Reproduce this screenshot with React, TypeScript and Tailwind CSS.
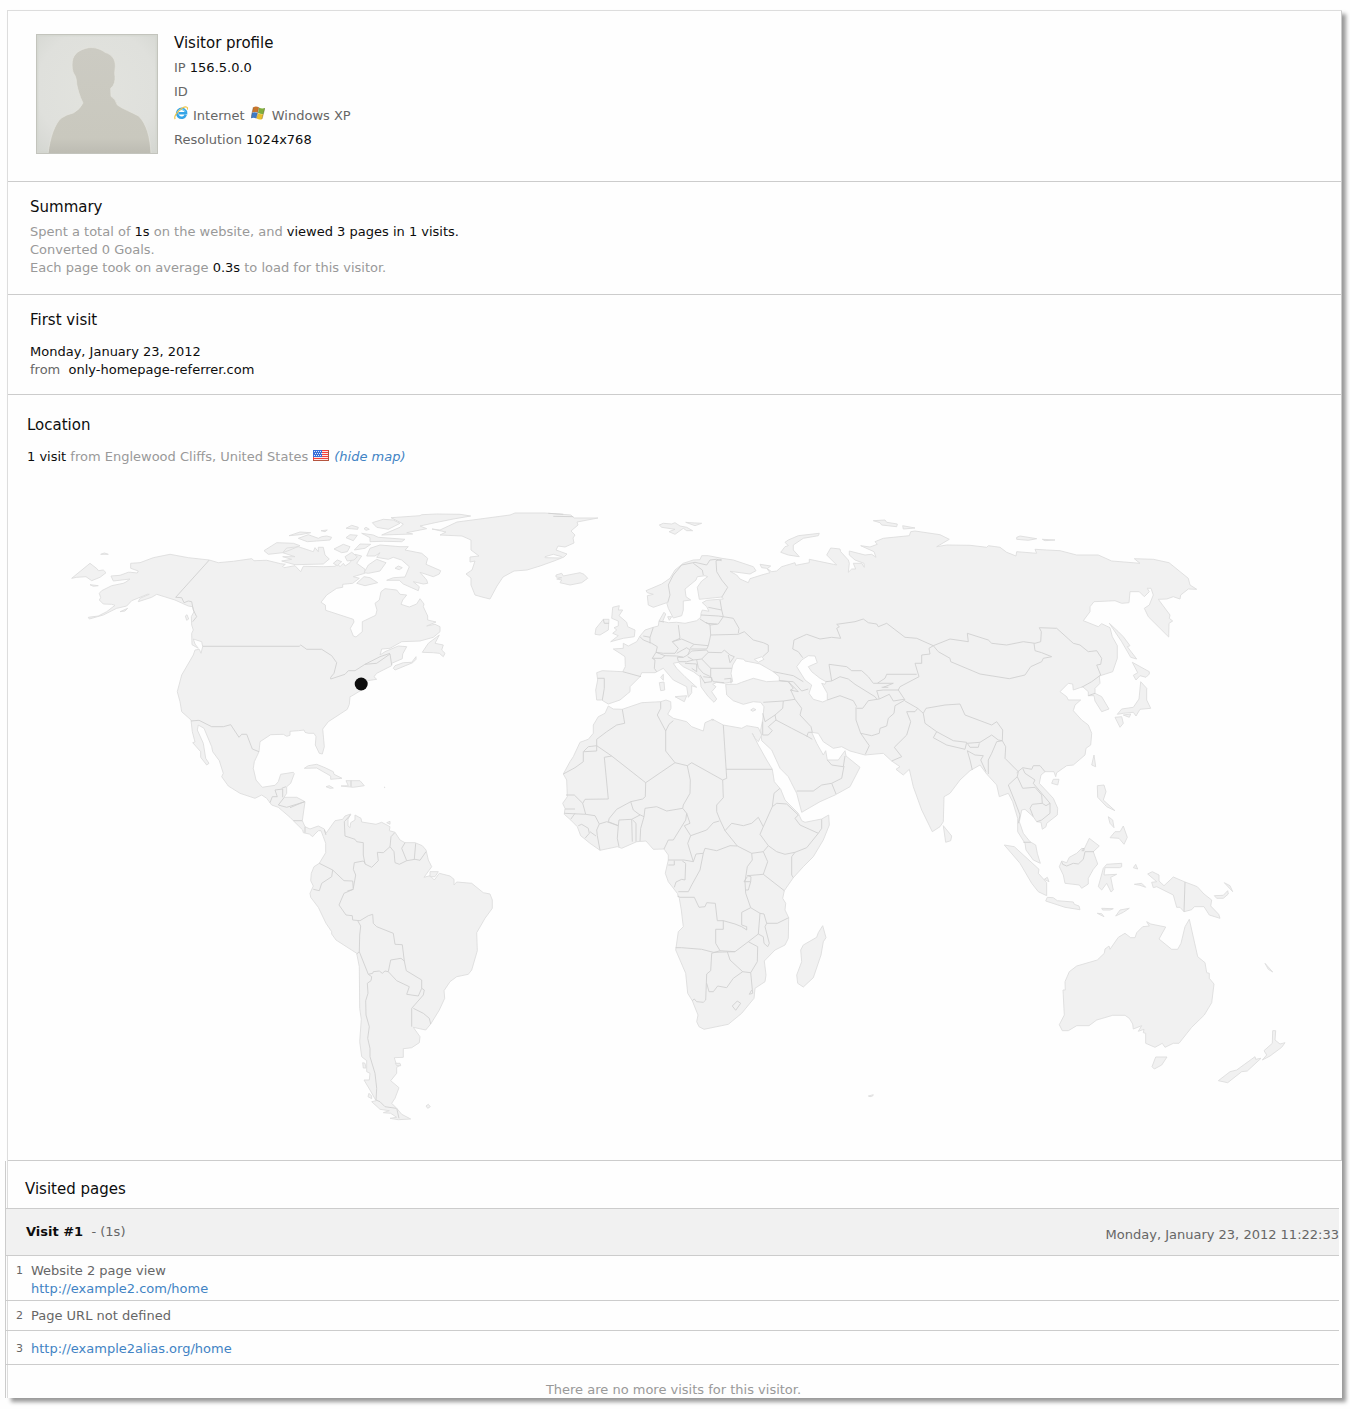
import React from "react";

/* ------------------------------------------------------------------ */
/* World map data. Every tile has an origin on the map and stores its  */
/* points in thirds of a map unit.                                     */
/* ------------------------------------------------------------------ */

type Tile = [number, number];

const NA: Tile = [60, 500];
const SA: Tile = [290, 780];
const EU: Tile = [540, 500];
const AF: Tile = [540, 680];
const AS: Tile = [740, 500];
const OC: Tile = [960, 820];

const project = ([ox, oy]: Tile, points: string) =>
  points
    .trim()
    .split(/\s+/)
    .map((pair) => {
      const [x, y] = pair.split(",").map(Number);
      return `${(ox + x / 3).toFixed(1)},${(oy + y / 3).toFixed(1)}`;
    })
    .join(" ");

const closed = (...parts: [Tile, string][]) =>
  "M" + parts.map(([tile, points]) => project(tile, points)).join(" ") + "Z";

const shapes = (tile: Tile, list: string) =>
  list
    .split("|")
    .map((points) => closed([tile, points]))
    .join("");

const lines = (tile: Tile, list: string) =>
  list
    .split("|")
    .map((points) => "M" + project(tile, points))
    .join("");

const americas = closed(
  [
    NA,
    "85,352 115,348 140,335 165,316 155,313 130,312 118,300 122,293 118,280 125,272 155,257 190,250 198,246 210,237 160,243 153,228 180,226 205,217 212,217 232,219 235,213 212,205 212,190 240,188 280,173 330,163 385,173 448,180 475,188 520,184 575,176 582,182 620,181 662,191 676,193 668,199 672,203 705,197 722,215 730,199 790,200 825,199 833,192 840,200 850,190 856,198 870,188 885,163 905,168 890,190 915,208 914,220 900,224 880,230 898,235 878,250 848,253 848,262 830,265 800,285 783,307 796,315 797,331 880,358 882,366 871,385 880,408 888,411 907,395 907,365 947,346 951,330 945,310 958,300 963,275 975,266 1010,270 1020,283 1040,285 1028,300 1023,313 1048,321 1070,312 1080,296 1092,312 1090,320 1103,348 1103,360 1128,366 1100,378 1125,373 1140,380 1140,395 1120,412 1080,423 1025,425 990,445 965,447 960,465 975,455 1015,438 1040,440 1028,462 1027,476 995,490 995,497 950,520 942,530 950,538 922,542 905,570 875,588 870,590 868,613 862,628 805,665 788,687 793,740 787,762 778,760 766,735 768,710 762,700 745,700 735,697 732,690 715,692 690,694 690,706 680,709 670,703 632,704 600,725 597,755 583,785 580,805 588,840 607,862 645,856 655,845 662,823 700,817 703,821 692,850 680,860 680,880 672,892 710,892 735,905",
  ],
  [
    SA,
    "37,122 45,140 60,147 85,138 103,147 108,160 135,122 158,118 165,108 182,102 174,118 174,138 180,143 182,128 195,120 195,105 213,115 215,126 258,133 275,127 300,140 298,152 315,157 330,180 345,188 375,188 397,197 408,210 415,240 425,260 402,292 420,287 433,300 448,280 480,288 492,298 492,315 500,306 545,310 580,338 600,342 607,360 607,385 585,415 560,458 562,512 545,570 535,583 500,590 480,605 462,632 464,655 448,690 422,732 407,750 370,742 390,770 388,788 365,803 340,806 340,832 313,833 318,850 332,855 320,862 320,880 302,902 327,923 315,955 305,970 320,985 335,1003 362,1017 325,1019 300,1015 320,1012 302,1000 280,998 298,992 270,988 245,965 258,962 240,930 222,900 238,900 240,880 230,875 230,842 215,830 209,785 214,718 209,685 208,560 200,520 138,480 125,462 125,455 108,430 85,382 62,352 60,340 70,318 62,302 64,280 72,260 88,250 107,218 107,190 100,170 93,152 85,152 72,165 68,170 58,162 40,158 38,150 10,122 0,112",
  ],
  [
    NA,
    "655,922 635,915 620,895 605,885 585,895 540,880 505,858 485,830 490,820 478,782 458,755 455,740 432,685 415,675 412,690 430,730 437,775 447,790 440,795 422,772 422,755 398,728 405,726 397,695 393,660 365,635 360,605 352,575 365,525 400,465 405,450 418,448 423,460 428,440 425,425 400,417 405,432 415,445 396,434 395,400 400,390 395,375 394,350 402,335 398,320 385,318 345,300 290,283 275,292 235,305 240,295 268,283 262,283 215,302 200,318 170,325 130,345 88,357",
  ],
);

const greenland =
  "M432,529 440,530 457,522 480,519 510,515 515,513 545,513 571,515 574,518 598,518 577,522 578,525 571,531 575,535 573,538 574,543 565,547 558,546 556,550 567,554 564,557 554,561 540,566 527,570 514,571 503,577 497,586 490,599 482,597 475,595 471,585 471,578 466,574 472,570 475,561 470,562 470,557 479,556 471,550 471,540 462,536 440,535 446,532Z";

const eurasia = closed(
  [
    EU,
    "170,600 167,570 173,540 170,518 187,512 248,515 256,500 255,470 240,460 220,447 250,445 250,430 265,438 290,425 300,408 315,390 340,382 355,378 357,363 372,337 377,342 368,364 385,368 410,367 435,370 470,362 482,352 483,340 487,330 507,334 500,320 487,308 500,301 550,297 546,291 478,298 472,262 485,243 503,230 495,227 472,230 468,240 435,267 438,290 452,300 430,303 430,330 425,347 400,354 385,325 380,308 340,322 325,315 322,287 340,283 322,278 318,272 365,252 390,235 405,210 430,190 460,180 480,179 485,167 505,167 545,175 580,180 640,200 648,212 630,222 570,214 590,225 600,237 625,248 630,236 665,225 690,218 680,205 665,203 660,193 692,198 682,206 695,215 710,213 725,200 765,188 767,196 808,188 808,178 880,193 890,195",
  ],
  [
    AS,
    "260,165 272,144 300,147 302,155 325,180 328,190 325,217 335,207 347,207 340,190 365,190 373,202 372,190 345,180 328,165 328,153 375,165 395,163 408,172 402,155 362,137 390,141 412,133 405,125 430,115 508,107 512,95 525,93 600,104 628,118 590,140 620,135 690,136 740,142 745,137 780,142 800,157 828,168 830,155 890,160 885,148 920,150 960,152 1010,165 1075,165 1115,183 1200,190 1183,176 1240,178 1287,188 1345,235 1350,255 1370,268 1345,267 1322,285 1320,297 1300,290 1280,297 1255,298 1290,345 1288,355 1298,363 1287,370 1286,411 1225,350 1213,325 1228,315 1240,285 1233,265 1222,265 1228,275 1213,290 1198,275 1170,275 1167,308 1145,310 1125,302 1062,305 1050,320 1050,335 1030,362 1075,380 1085,371 1110,383 1117,410 1132,437 1132,475 1118,515 1078,528 1080,550 1065,565 1065,580 1085,590 1107,627 1085,635 1065,603 1062,587 1045,587 1045,575 1028,560 1000,570 998,552 985,550 960,575 980,590 985,600 1022,600 1005,615 1000,632 1025,660 1045,675 1055,700 1052,735 1038,745 1035,765 1000,795 980,797 950,818 947,830 942,815 915,815 903,825 898,850 940,895 953,925 952,945 920,970 918,980 907,988 903,967 890,965 880,950 855,928 845,930 838,965 850,1000 870,1025 887,1035 892,1060 901,1090 880,1080 858,1050 855,1030 833,995 833,955 818,905 805,880 778,890 770,855 740,822 720,795 690,812 660,840 630,880 612,890 610,965 600,980 577,995 545,930 520,860 508,808 490,825 468,808 480,800 455,783 430,760 375,765 330,753 305,740 280,745 250,725 235,700 215,697 230,730 250,765 257,752 262,780 295,780 315,752 318,768 360,802 330,860 285,885 240,905 185,937 170,880 145,830 120,805 95,750 65,722 62,690 68,660 72,620 62,607",
  ],
  [
    EU,
    "640,605 610,613 580,602 560,585 557,553 590,553 605,547 640,535 680,545 718,543 718,530 700,515 660,492 642,488 615,483 612,478 590,475 578,495 573,520 578,545 553,550 530,547 518,553 528,560 515,575 530,597 522,607 505,590 490,570 483,560 480,530 460,515 430,500 415,487 400,490 410,505 435,530 470,562 455,557 455,578 445,592 440,560 400,540 370,505 345,518 305,518 300,530 270,560 270,575 240,600 205,612 185,600",
  ],
);

const africa = closed([
  AF,
  "205,78 220,87 247,88 305,68 362,65 378,60 392,65 393,85 383,103 400,115 440,125 455,140 490,153 495,128 518,118 550,135 605,145 620,137 655,143 665,165 655,185 645,175 637,160 655,195 680,240 697,268 703,305 722,328 735,360 775,400 785,422 795,427 845,417 866,405 868,435 850,480 820,530 790,560 760,593 733,632 728,655 737,670 735,690 746,713 745,775 735,795 705,810 673,843 678,885 675,905 645,925 642,955 605,1000 565,1033 492,1048 477,1040 470,1025 474,1005 457,962 443,940 437,880 407,810 415,755 430,740 424,690 418,655 412,640 385,605 376,580 385,540 385,525 372,507 340,508 318,483 290,485 245,505 232,500 180,511 150,490 122,467 112,440 92,420 73,403 75,385 68,370 82,350 80,300 70,282 90,245 100,230 120,187 145,178 160,160 160,135 175,110 195,100",
]);

const islands =
  shapes(
    NA,
    "35,235 90,190 112,207 115,212 130,210 138,218 120,232 95,242 78,230 50,232|122,163 145,163 133,159|90,254 115,257 100,259|180,335 203,325 195,333|376,348 381,344 386,357 380,361|1087,457 1105,430 1138,405 1125,430 1150,435 1145,450 1155,460 1150,470 1138,460 1120,458|1000,505 1005,497 1030,488 1055,487 1068,470 1068,478 1058,488 1005,510|733,805 745,797 770,793 795,803 820,815 822,823 846,835 812,838 812,828 798,820 770,804|843,858 865,857 858,842 900,842 913,857 880,862|798,860 808,857 820,864 810,865|612,152 650,128 700,130 720,137 690,150 668,158 625,163|668,158 680,144 715,140 760,155 765,143 775,155 775,142 790,142 795,165 808,177 790,192 705,194 665,183 695,178 668,170 705,170|687,107 720,96 752,98 720,104|715,115 745,104 775,115 785,110 800,108 815,112 810,120 770,123 742,125|783,92 802,90 795,95|858,85 875,76 895,82 893,88|912,86 918,82 928,88 918,91|858,113 870,104 892,106 880,122|822,147 850,133 870,140 862,155 845,158|883,150 900,132 932,133 915,145|855,170 875,157 892,170 882,180 862,183|820,190 832,180 845,185 832,197|905,100 940,105 955,112 1035,118 1025,125 970,124 930,125 930,113|937,68 970,58 1000,60 1020,70 985,88 950,82|993,53 1080,47 1085,44 1130,42 1200,43 1232,48 1180,57 1125,68 1080,78 1100,86 1040,98 1058,102 965,105 1020,82 1030,72|920,168 930,145 960,135 1020,140 1045,140 1035,150 1085,160 1103,175 1098,193 1142,212 1138,222 1120,230 1080,217 1100,240 1103,250 1090,252 1060,245 1078,260 1075,272 1030,252 1018,241 980,241 1000,233 1035,231 1048,200 1025,180 1000,172 985,178 950,172 960,158 945,168|912,218 925,195 950,178 978,188 960,213 925,220|890,250 912,230 930,233 953,248 915,257|1005,205 1015,198 1027,203 1018,209|972,862 974,861 974,863",
  ) +
  shapes(
    SA,
    "218,848 225,850 228,864 220,864|237,940 245,948 245,956 234,950|408,978 415,973 421,980 413,985|290,128 300,124 300,133|420,275 445,275 435,290 420,290|316,850 330,850 332,857 320,857",
  ) +
  shapes(
    EU,
    "218,322 238,317 235,330 248,330 237,347 260,367 263,380 285,390 283,410 250,415 212,425 235,407 218,400 230,390 222,383 235,378 235,363 215,355|165,403 168,385 190,358 207,358 205,390 180,405|48,225 65,220 70,228 120,218 132,223 143,235 125,248 90,255 60,248 65,240 50,237 65,233 48,231|358,75 370,70 395,72 405,68 420,78 440,82 458,92 440,92 430,85 405,103 387,95 405,88 365,82|437,67 450,68 485,70 465,77|722,157 735,140 745,137 735,127 745,120 775,107 838,100 835,107 790,115 760,135 760,150 778,170 745,165|358,548 372,546 374,570 362,572|362,532 370,523 370,541|405,590 440,587 433,605|632,630 640,625 648,629 638,634|383,350 395,350 388,361|514,658 522,659 517,661",
  ) +
  shapes(AF, "848,737 858,773 850,785 843,825 820,893 790,921 773,910 770,885 785,845 782,810 790,795 830,772 835,758") +
  shapes(
    AS,
    "400,62 435,60 440,67 472,72 470,80 425,75 420,68|488,77 525,84 490,87|830,112 840,108 890,116 865,121 830,118|907,118 945,120 915,122|1108,370 1135,395 1150,410 1170,437 1162,440 1190,477 1172,472 1145,425|1177,487 1228,515 1228,522 1218,532 1200,527 1188,540 1180,526 1193,518|1202,545 1220,565 1220,600 1232,625 1200,628 1188,648 1180,637 1150,640 1132,643 1145,627 1180,622 1197,597|1125,652 1145,650 1150,670 1140,682|1150,645 1172,642 1168,652|1055,795 1062,765 1067,800|935,850 940,838 957,838 953,855|610,977 635,1008 632,1022 617,1027|1072,857 1092,855 1098,875 1090,900 1125,932 1100,920 1073,892|1105,950 1118,960 1122,983 1110,970|1110,1013 1125,995 1140,995 1150,978 1162,1012 1152,1033 1137,1015",
  ) +
  shapes(
    OC,
    "133,75 163,80 237,148 235,160 260,188 260,227 235,215 215,190 180,130|257,243 262,232 280,233 292,242 340,246 343,253 357,258 360,269 315,262|298,140 305,123 320,128 328,112 350,100 365,85 372,88 388,55 418,78 400,95 413,132 400,148 385,175 385,192 365,205 358,195 315,190 310,165|415,200 430,145 440,133 485,130 485,140 478,143 435,143 432,165 470,163 452,172 460,210 453,216 440,190 425,210|563,162 577,155 597,165 597,183 612,197 640,171 675,186 712,200 732,222 755,240 752,258 776,283 780,295 748,285 732,260 703,260 695,269 672,275 660,262 650,262 640,225 590,200 580,203 575,187 590,185|763,227 790,226 803,212 805,222 790,235 770,235|793,188 810,197 818,215|520,143 527,133 533,147|523,193 545,190 557,202 540,196|412,280 425,281 432,290|425,265 460,266 450,270 428,270|467,288 480,270 508,265 490,277|253,178 262,172 267,185|915,430 938,456 925,448|587,711 621,711 605,735 583,747 576,740|938,632 947,632 945,660 960,672 975,668 965,682 930,708 907,720 920,705 912,692 937,670|775,782 810,755 830,750 885,710 887,718 903,715 862,753 845,755 803,788|560,305 572,312 617,321 597,357 635,388 653,388 663,370 675,320 688,298 713,410 735,428 740,458 748,460 748,475 762,492 755,548 733,585 695,622 657,670 640,670 615,682 607,670 585,682 557,670 557,640 550,638 552,628 535,634 545,617 520,627 518,612 508,595 495,586 458,586 410,600 387,617 350,617 325,632 307,632 298,614 313,585 309,510 316,510 315,485 328,455 350,438 412,420 433,400 435,387 447,378 450,388 475,352 495,340 512,353 525,353 530,338 548,320 568,318|-275,828 -260,824 -262,828 -270,830",
  );

const seas =
  shapes(EU, "643,478 665,470 672,478 655,487|15,170 40,163 65,170 62,174 15,173") +
  shapes(AS, "170,500 185,480 205,467 225,468 232,488 205,500 215,515 240,535 258,545 255,553 245,550 262,580 262,600 248,606 220,598 207,580 215,555 195,540");

const borders =
  lines(
    NA,
    "448,180 347,292 365,293 372,308 385,303 395,305 400,330 410,350 398,365|428,439 718,439 722,435 740,448 785,448 815,467 830,488 822,520 812,532 812,537 855,523 865,512 885,512 915,493 960,470 990,460|915,493 950,490 990,462 995,495|393,663 417,661 455,680 490,680 512,674 537,712 545,703 560,703 577,747 597,755|630,908 637,890 652,890 645,870 668,867 668,892|672,893 655,915 680,922 735,905|665,865 678,860|873,842 873,860",
  ) +
  lines(
    SA,
    "0,83 43,65|10,122 37,122|45,140 45,158|103,150 108,165|182,104 163,125 165,168 195,178 200,185 220,188 220,225 225,252 245,262 265,242 262,217 280,218 300,200 303,170 314,158|300,200 312,215 315,248 328,253 350,242 375,238 390,241 408,215|345,188 335,205 350,242|377,190 373,238|226,250 220,243 193,248 190,268 197,285 190,325|88,250 128,270 162,302 188,303 190,328 172,333|128,270 125,290 95,310 88,332 70,328|190,328 162,340 147,375 168,405 187,407 188,420 210,422|203,422 212,438 209,465 208,515 200,522|210,422 235,407 248,403 250,430 260,440 310,460 315,493 337,494 343,543 349,572 395,600 395,625 385,648 350,643 358,620 320,602 295,575 302,540 333,535 343,543|208,515 235,583 248,580 250,575 268,573 277,580 285,573 295,575|235,583 245,590 243,602 232,610 234,640 227,662 228,705 238,740 233,775 240,805 240,830 255,880 260,925 258,960 270,965 285,980 318,985|395,625 403,630 400,645 365,685 365,740|370,685 400,700 418,715 422,732|320,985 327,1015",
  ) +
  lines(
    EU,
    "173,535 193,535 193,565 187,600|248,515 303,530|300,410 310,420 335,430 352,440 348,457 337,475 345,480 343,505 350,515|310,408 330,412 330,430|340,382 330,412|190,358 193,370 207,370|348,457 370,460 405,460 415,445 397,425 420,415 415,375|337,475 365,475 375,467 348,457|375,467 410,468 430,472|410,460 440,443 450,450 443,465 430,472 412,472 415,483|397,425 425,417 462,433 450,445|462,433 505,437 512,405 510,375 498,367|450,447 500,447 505,437|443,465 455,453 500,450 505,457 485,477 460,480 443,470|485,477 512,505 575,505|505,457 545,458 553,450 570,465 583,470 570,488 565,465|415,485 440,485 460,480|435,490 470,492 470,515 455,505|470,480 475,503 490,520 512,530 512,505|480,525 495,550|490,530 515,533 515,545 492,548|512,530 520,545 553,548|553,537 573,535 573,550|512,405 595,403 613,395 640,420 670,428 685,435 685,455 668,470|510,375 535,372 550,350 580,355 597,385 595,400|483,345 535,348 550,350|480,357 500,370 530,372|505,322 545,330 550,350|545,330 540,300|545,178 528,182 530,215 545,240 563,262 545,292|490,225 487,210 460,190|383,308 390,285 385,255 400,225 425,195 465,187 500,195 510,180 530,178 545,182|357,363 372,366|25,40 70,43|40,49 100,50",
  ) +
  lines(
    AF,
    "247,88 254,130 230,135 200,155 170,178 170,197 145,200 130,215 130,245 105,263 70,282|170,197 170,213 132,215|170,197 215,228 317,308 405,248 377,213 377,153 352,105 362,85 362,65|377,153 387,133 400,122|215,228 193,232 205,357 135,358 128,370 103,345 78,345|405,248 442,257 455,248 548,300 560,295 550,135|558,268 697,268|442,257 451,300 450,340 430,375 428,385|548,300 550,353 530,375 530,395 540,420 555,452|317,308 316,350 308,357 272,365 280,390 297,403 312,410 315,385 350,380 380,393 428,385 440,400 450,430 433,437 452,467 443,490 460,545|272,365 230,388 208,415 205,425 235,437 237,420 275,418 300,405|128,370 137,403 73,400|75,387 105,387|137,403 165,407 178,432 170,450 172,467 180,511|105,400 92,418|115,437 125,433 145,445 148,460 135,475|150,455 168,468|178,432 200,425 235,437 232,475 237,500|275,418 277,485|278,420 288,430 288,485|312,410 302,445 300,483|440,400 437,420 400,480 385,480 372,507|452,467 500,450 520,428 538,423|555,452 592,498 570,497 530,512 495,505 490,520 468,522 460,545 432,540 385,540|385,555 403,555 403,542|427,543 437,550 435,600 425,598 408,606 403,622|490,520 480,570 455,615 445,635 415,635|412,648 420,652 463,652 477,682 495,680 500,668 526,670 532,722 550,722 585,732 605,740 620,750 620,740 605,735 605,697 632,683 617,640 615,605 622,560 637,540 635,520 592,498|555,452 575,430 610,437 635,430 655,412 670,440 660,463 685,497 670,515 635,520|670,440 697,380 710,370 740,372 775,405 765,415 780,435 835,460 845,445 845,418|835,460 800,503 765,517 735,523 710,515 685,497|697,380 702,340 720,325|765,517 755,530 755,585 760,593|670,515 683,545 670,583 622,587|670,583 733,632|622,587 633,590 632,605 612,605 622,590|632,605 625,630 617,630|632,683 660,700 672,702 680,730 712,730 746,713|660,700 655,762 670,770 672,790 683,800 688,790 675,740 680,730|655,762 625,785 585,815 540,812 527,790 527,748 550,748 550,722|407,803 425,803 485,808 520,817 585,815|540,812 515,820 512,872 500,882 497,960 490,967 470,965 463,957 457,962|500,910 507,935 520,935 533,918 560,923 580,895 608,875 570,840 562,815|625,785 653,800 652,845 632,878 608,875|632,878 638,940 628,943 635,930|577,978 592,963 602,970 587,991 577,978",
  ) +
  lines(
    AS,
    "70,607 130,603 165,598 152,570 160,565 145,545 118,542|100,515 160,527 190,545|118,542 160,545 185,573 205,567|145,545 175,575 150,570|130,603 128,625 105,645 75,665 68,640|105,645 108,660 155,685 200,708 217,718|200,710 205,697 217,697|165,598 185,625 180,645 213,680 217,697|108,660 85,680 97,692 85,705 68,705 68,665|170,873 220,873 245,855 275,850 305,835 312,798|275,850 288,882|262,780 275,795 310,800 315,768|262,600 300,587 340,602 350,620|348,622 348,660 362,700 388,737 376,763|350,625 368,625 385,602 418,597 448,583 460,603 492,598|495,600 465,617 462,640 445,655 440,678 420,685 418,700 395,707 362,700|495,603 533,625 525,635 500,635 512,665 500,705 463,742 485,770 455,783|258,545 275,543 300,530 325,537 345,553 405,590 410,597|275,543 267,493 320,500 335,512 365,512 385,530 400,550 412,550 435,535 440,523 530,523|537,530 525,490 545,490 545,465 570,462 567,445 580,437|537,530 480,560 475,570 430,570 410,572 418,597|475,570 495,600|412,550 460,550 430,562|425,562 445,562|188,473 175,455 158,447 162,420 200,403 240,417 275,412 302,415 290,385 298,380 290,373 345,365 370,357 385,368 410,372 415,380 440,370 495,412 530,415 580,437|580,437 630,417 685,425 682,400 745,420 755,430 800,435 850,425 885,430 902,425 904,395 898,383 950,385 1000,430 1020,435 1045,455 1070,452 1085,475 1082,493 1070,495 1082,525 1055,545 1025,562|1045,587 1065,580|580,437 595,455 630,475 632,485 720,522 808,536 855,525 872,500 905,485 910,475 935,470 905,458 885,452 882,430|533,625 550,640 558,625 615,615 660,612 675,645 755,675 770,665 788,690 787,722 775,720 755,705 720,727 682,730|580,713 590,695 640,722 680,727 675,748 620,735 580,713|550,640 555,670 590,695|682,730 690,742 715,742 718,730|682,752 705,765 730,767 722,780 738,815|682,752 690,780 697,810|787,722 770,725 755,760 745,780 745,822|787,722 797,740 795,775 835,815|830,818 848,803 875,808 880,797 900,797 915,815|848,805 855,820 885,840 880,850 930,910 930,940 905,960 890,965|835,815 832,830 848,865 885,862 905,885 907,910|832,830 805,855 825,905 840,945 835,970|907,910 877,913 870,925 880,950|907,910 918,917 930,910|850,1027 872,1027",
  ) +
  lines(OC, "305,125 308,133 320,138 340,130 355,132 370,118 375,95 402,95|365,88 372,85 372,92 365,92|675,186 672,275");

function WorldMap() {
  return (
    <svg viewBox="8 466 1333 694" className="block h-auto w-full" role="img" aria-label="World map of visits">
      <g stroke="#dedede" strokeWidth="0.9" strokeLinejoin="round" fill="#f1f1f1">
        <path d={americas} />
        <path d={greenland} />
        <path d={eurasia} />
        <path d={africa} />
        <path d={islands} />
        <path d={seas} fill="#fefefe" />
        <path d={borders} fill="none" stroke="#d0d0d0" />
      </g>
      <circle cx="361.200" cy="684" r="6.500" fill="#0d0d0d" />
    </svg>
  );
}

function Avatar() {
  return (
    <svg viewBox="0 0 366 360" className="mt-[3px] block h-[120px] w-[122px] shrink-0" role="img" aria-label="Visitor avatar">
      <defs>
        <radialGradient id="paper" cx="50%" cy="45%" r="70%">
          <stop offset="0" stopColor="#e2e3de" />
          <stop offset="0.7" stopColor="#dfe0dc" />
          <stop offset="1" stopColor="#d5d7d2" />
        </radialGradient>
        <linearGradient id="body" x1="0" y1="0" x2="0" y2="1">
          <stop offset="0" stopColor="#cccbc3" />
          <stop offset="0.85" stopColor="#c9c8be" />
          <stop offset="1" stopColor="#bcbbb2" />
        </linearGradient>
      </defs>
      <rect width="366" height="360" fill="url(#paper)" />
      <rect x="5" y="5" width="356" height="350" fill="none" stroke="#d3d5cf" strokeWidth="4" opacity="0.7" />
      <path
        d="M36 360C42 310 56 270 76 252Q92 241 112 237Q132 226 141 207C130 185 125 165 122 150C122 138 119 126 114 120C109 112 107 96 109 82C112 58 132 46 158 41C178 39 196 46 207 55C230 62 238 78 238 96L236 118C238 130 238 144 232 154C228 162 226 158 224 164L225 187Q238 194 244 213C262 226 286 234 308 246C332 270 343 310 345 360Z"
        fill="url(#body)"
        stroke="#e6e5df"
        strokeWidth="2"
      />
      <rect x="1.500" y="1.500" width="363" height="357" fill="none" stroke="#c3c4bd" strokeWidth="3" />
    </svg>
  );
}

function BrowserIcon() {
  return (
    <svg viewBox="0 0 14 14" className="mr-[5px] inline-block size-3.5 align-baseline" aria-hidden="true">
      <path d="M11.800 8.900A4.500 4.500 0 1 1 12.100 7.300H4.800" fill="none" stroke="#35a5e8" strokeWidth="2.500" />
      <path d="M3.500 6A4.200 4.200 0 0 1 11.300 5.800" fill="none" stroke="#7fd3f7" strokeWidth="1" />
      <path d="M1.300 13C-.6 11.300 3 5.300 8 2.300C11.500 .3 14.300 .4 13.300 3.600" fill="none" stroke="#f0c64a" strokeWidth="1.200" />
    </svg>
  );
}

function WindowsIcon() {
  return (
    <svg viewBox="0 0 14 14" className="mr-[3px] ml-[6px] inline-block size-3.5 align-baseline" aria-hidden="true">
      <path d="M2.300 1.200Q5 -.3 7.900 1.300L6.700 6.600Q4 5.300 1.100 6.500Z" fill="#c9752b" />
      <path d="M8.200 1.700Q11 3 13.900 2L12.500 7.800Q10 8.400 7 7Z" fill="#7fae3c" />
      <path d="M1 6.700Q3.600 5.600 6.500 6.800L5.200 12.400Q2.700 11.200 0 12.200Z" fill="#3e7ac4" />
      <path d="M6.900 7.200Q9.700 8.600 12.400 7.900L11 13.200Q8.300 14 5.600 12.600Z" fill="#e9bf2e" />
      <path d="M2.300 1.200L0 12M13.900 2L11 13M7.900 1.500L5.300 12.400" stroke="#5b4a33" strokeWidth="0.700" opacity="0.550" />
    </svg>
  );
}

function UsFlag() {
  const stripes = [1, 3, 5, 7, 9];
  return (
    <svg viewBox="0 0 16 11" className="mx-[5px] inline-block h-[11px] w-4 align-baseline" role="img" aria-label="United States">
      <rect width="16" height="11" fill="#f4403b" />
      {stripes.map((y) => (
        <rect key={y} x="1" y={y} width="14" height="1" fill="#fbe9e6" />
      ))}
      <rect width="9" height="7" fill="#3a6fd8" />
      {[1, 3, 5].map((y) =>
        [1, 3, 5, 7].map((x) => <rect key={`${x}-${y}`} x={x + (y === 3 ? 1 : 0)} y={y} width="1" height="1" fill="#dfe9fb" />),
      )}
      <path d="M0 10.500H16M15.500 0V11" stroke="#b5553f" fill="none" />
    </svg>
  );
}

const heading = "text-[15px] leading-6 font-normal text-[#0d0d0d]";
const dark = "text-[#0d0d0d]";
const link = "text-[#4183c4]";

const actions = [
  { title: "Website 2 page view", url: "http://example2.com/home", pad: "pt-1.5 pb-0.5" },
  { title: "Page URL not defined", pad: "pt-1.5 pb-[5px]" },
  { url: "http://example2alias.org/home", pad: "pt-[9px] pb-1.5" },
];

export default function App() {
  return (
    <div className="bg-[#fefefe] pt-2.5 pr-2 pb-[11px] pl-[7px] font-['DejaVu_Sans',sans-serif] text-[13px] leading-[18px] text-[#666]">
      <main className="border-t border-l border-[#ddd] bg-[#fefefe] shadow-[4px_4px_4px_0px_#999]">
        <section className="flex gap-4 border-r border-b border-[#ccc] pt-5 pb-[27px] pl-7">
          <Avatar />
          <div className="leading-6">
            <h1 className={`mb-px ${heading}`}>Visitor profile</h1>
            <p>
              IP <span className={dark}>156.5.0.0</span>
            </p>
            <p>ID</p>
            <p>
              <BrowserIcon />
              Internet
              <WindowsIcon /> Windows XP
            </p>
            <p>
              Resolution <span className={dark}>1024x768</span>
            </p>
          </div>
        </section>

        <section className="border-r border-b border-[#ccc] pt-[13px] pb-[17px] pl-[22px] text-[#999]">
          <h2 className={`mb-1 ${heading}`}>Summary</h2>
          <p>
            Spent a total of <span className={dark}>1s</span> on the website, and{" "}
            <span className={dark}>viewed 3 pages in 1 visits.</span>
          </p>
          <p>Converted 0 Goals.</p>
          <p>
            Each page took on average <span className={dark}>0.3s</span> to load for this visitor.
          </p>
        </section>

        <section className="border-r border-b border-[#ccc] pt-[13px] pb-[15px] pl-[22px]">
          <h2 className={`mb-[11px] ${heading}`}>First visit</h2>
          <p className={dark}>Monday, January 23, 2012</p>
          <p>
            from&nbsp; <span className={dark}>only-homepage-referrer.com</span>
          </p>
        </section>

        <section className="border-r border-b border-[#ccc] pt-[18px]">
          <div className="pl-[19px]">
            <h2 className={`mb-[11px] ${heading}`}>Location</h2>
            <p className="text-[#999]">
              <span className={dark}>1 visit</span> from Englewood Cliffs, United States
              <UsFlag />
              <a href="#map" className={`italic ${link}`}>
                (hide map)
              </a>
            </p>
          </div>
          <div id="map">
            <WorldMap />
          </div>
        </section>

        <section className="-ml-[3px] border-l border-[#ccc] pr-[3px]">
          <div className="ml-px border-l border-[#ddd] pt-4 pb-[7px] pl-[17px]">
            <h2 className={heading}>Visited pages</h2>
          </div>
          <div className="flex h-12 items-center justify-between border-y border-[#ccc] bg-[#f1f1f1] pl-5">
            <h3>
              <strong className={`font-bold ${dark}`}>Visit #1</strong>&nbsp; - (1s)
            </h3>
            <time dateTime="2012-01-23T11:22:33" className="pt-1.5">
              Monday, January 23, 2012 11:22:33
            </time>
          </div>
          <ol>
            {actions.map((action, i) => (
              <li key={i} className={`flex gap-2 border-b border-[#ccc] pl-2.5 ${action.pad}`}>
                <span className="w-[7px] text-[11px]">{i + 1}</span>
                <div>
                  {action.title && <p>{action.title}</p>}
                  {action.url && (
                    <a href={action.url} className={`block ${link}`}>
                      {action.url}
                    </a>
                  )}
                </div>
              </li>
            ))}
          </ol>
          <p className="ml-px border-l border-[#ddd] pt-[17px] text-center leading-4 text-[#999]">
            There are no more visits for this visitor.
          </p>
        </section>
      </main>
    </div>
  );
}
